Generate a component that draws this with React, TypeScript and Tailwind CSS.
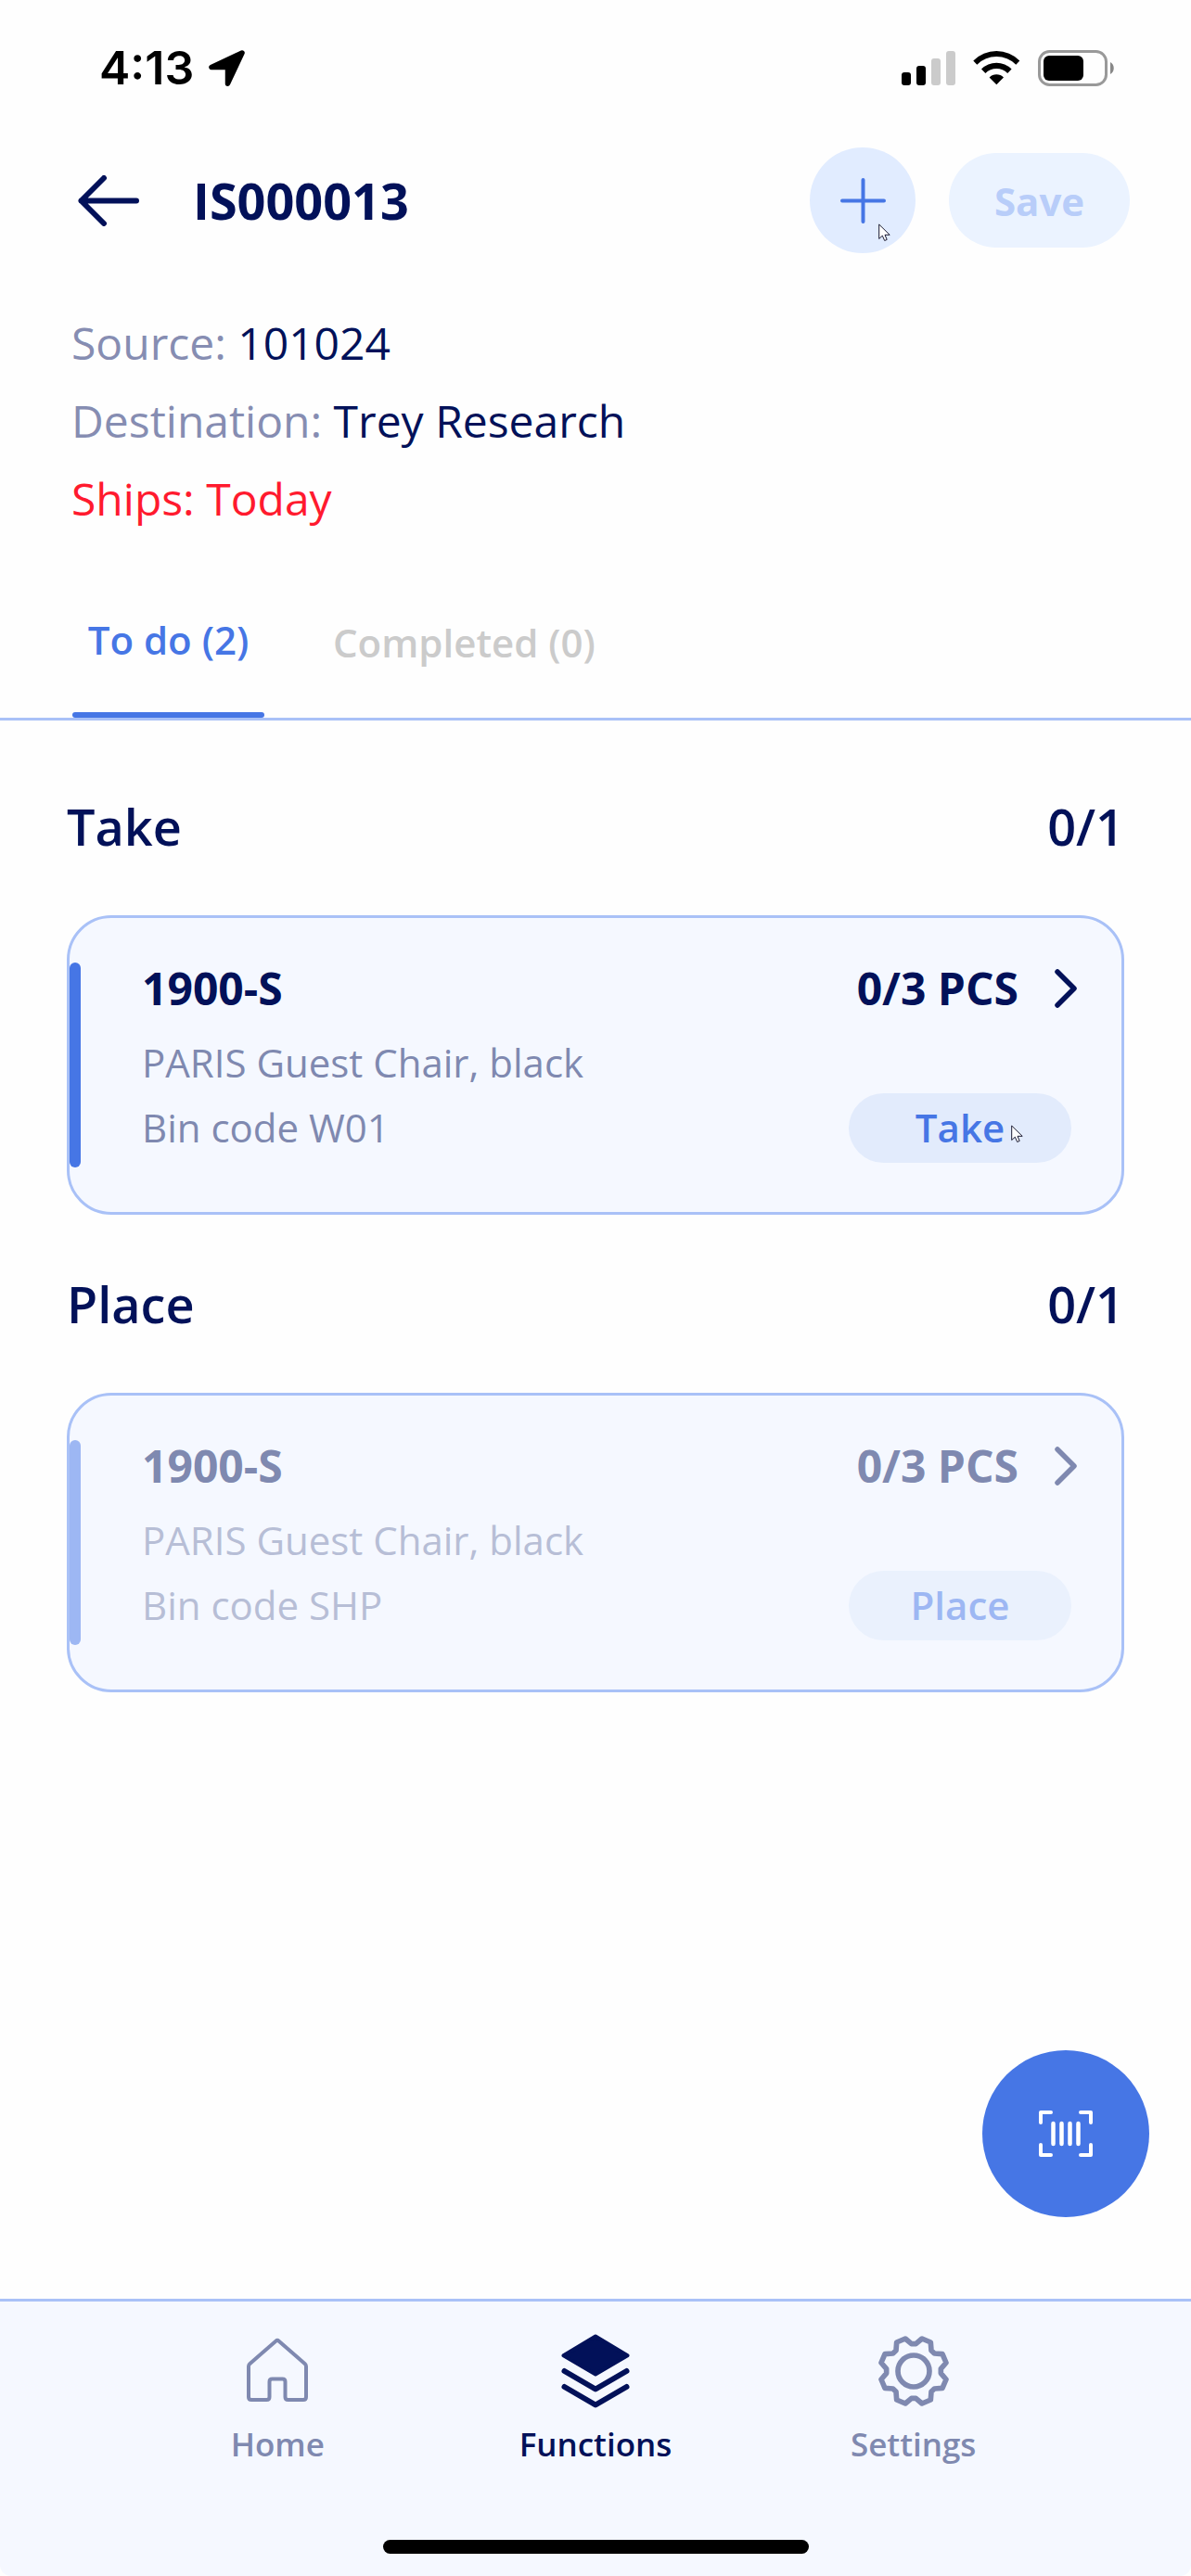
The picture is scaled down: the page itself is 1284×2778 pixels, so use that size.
function LocationIcon() {
  return (
    <svg width="39" height="39" viewBox="0 0 39 39" fill="black" stroke="black" strokeWidth="5.5" strokeLinejoin="round" aria-hidden="true">
      <path d="M36 3 3 18.500H20.500V36.200Z" />
    </svg>
  );
}

function SignalIcon() {
  return (
    <svg width="58" height="38" viewBox="0 0 58 38" aria-hidden="true">
      <rect x="0" y="24" width="10" height="14" rx="3" />
      <rect x="16" y="17" width="10" height="21" rx="3" />
      <rect x="32" y="9" width="10" height="29" rx="3" fill="#cbcbcb" />
      <rect x="48" y="1" width="10" height="37" rx="3" fill="#cbcbcb" />
    </svg>
  );
}

function WifiIcon() {
  return (
    <svg width="51" height="38" viewBox="0 0 51 38" aria-hidden="true">
      <path d="M.3 11.500A35 35 0 0 1 50.300 11.500L46.300 15.700A30 30 0 0 0 4.300 15.700Z" />
      <path d="M9 20.500A23 23 0 0 1 41.600 20.500L37.200 25A16.800 16.800 0 0 0 13.400 25Z" />
      <path d="M17.600 29.400A11 11 0 0 1 33 29.400L25.300 37.200Z" />
    </svg>
  );
}

function BatteryIcon() {
  return (
    <svg width="83" height="39" viewBox="0 0 83 39" aria-hidden="true">
      <rect x="1.5" y="1.5" width="72" height="36" rx="11" fill="none" stroke="#999" strokeWidth="3" />
      <rect x="6" y="6" width="43" height="27" rx="6" />
      <path d="M78 13c5 2.500 5 10.500 0 13Z" fill="#888" />
    </svg>
  );
}

function Pointer() {
  return (
    <svg width="14" height="20" viewBox="0 0 14 20" fill="white" stroke="#1b1b33" strokeWidth="1" aria-hidden="true">
      <path d="M.7 1V16.500L4.300 13.200 6.700 18.500 9.200 17.400 7 12.300H12.200Z" />
    </svg>
  );
}

function ChevronIcon() {
  return (
    <svg width="24" height="42" viewBox="0 0 24 42" fill="none" stroke="currentColor" strokeWidth="5.5" strokeLinecap="round" strokeLinejoin="round" aria-hidden="true">
      <path d="M3 3 21 21 3 39" />
    </svg>
  );
}

function HomeIcon() {
  return (
    <svg width="80" height="80" viewBox="0 0 80 80" fill="none" stroke="currentColor" strokeWidth="4" strokeLinejoin="round" aria-hidden="true">
      <path d="M38.300 7.700Q40 6.200 41.700 7.700L69.800 32.200Q71 33.300 71 35V68Q71 71 68 71H51.500Q48.500 71 48.500 68V51.500Q48.500 48.500 45.500 48.500H34.500Q31.500 48.500 31.500 51.500V68Q31.500 71 28.500 71H12Q9 71 9 68V35Q9 33.300 10.200 32.200Z" />
    </svg>
  );
}

function LayersIcon() {
  return (
    <svg width="80" height="80" viewBox="0 0 80 80" fill="none" stroke="currentColor" strokeLinecap="round" strokeLinejoin="round" aria-hidden="true">
      <path d="M40 2.500 74.500 23.300 40 43.500 5.500 23.300Z" fill="currentColor" strokeWidth="4" />
      <path d="M6.500 40 40 59.500 73.500 40" strokeWidth="6" />
      <path d="M6.500 57 40 76.500 73.500 57" strokeWidth="6" />
    </svg>
  );
}

function GearIcon() {
  return (
    <svg width="80" height="80" viewBox="-120 -120 240 240" fill="none" stroke="currentColor" strokeWidth="17" strokeLinejoin="round" aria-hidden="true">
      <path d="M7-88 27-105 55-93 57-67 67-57 93-55 105-27 88-7V7L105 27 93 55 67 57 57 67 55 93 27 105 7 88H-7L-27 105-55 93-57 67-67 57-93 55-105 27-88 7V-7L-105-27-93-55-67-57-57-67-55-93-27-105-7-88Z" />
      <circle r="51" />
    </svg>
  );
}

type Task = {
  heading: string;
  bin: string;
  action: string;
  active: boolean;
};

const tasks: Task[] = [
  { heading: "Take", bin: "W01", action: "Take", active: true },
  { heading: "Place", bin: "SHP", action: "Place", active: false },
];

function TaskCard({ task }: { task: Task }) {
  const { active } = task;
  return (
    <article className="relative mt-16 rounded-[48px] border-3 border-[#a9c1f7] bg-[#f5f8ff] pt-[46px] pr-12 pb-14 pl-[78px]">
      <span className={`absolute inset-y-12 left-0 w-3 rounded-full ${active ? "bg-[#4676e5]" : "bg-[#9db7f3]"}`} />
      <div className={`flex h-[60px] items-center text-[48px] font-bold ${active ? "text-[#021159]" : "text-[#7f89b0]"}`}>
        <h3>1900-S</h3>
        <span className="mr-[39px] ml-auto">0/3 PCS</span>
        <button type="button" aria-label="Open details">
          <ChevronIcon />
        </button>
      </div>
      <div className={`mt-[15px] text-[42px] leading-[70px] ${active ? "text-[#7f89b0]" : "text-[#b7bed6]"}`}>
        <p>PARIS Guest Chair, black</p>
        <div className="flex h-[70px] items-center justify-between">
          <p>Bin code {task.bin}</p>
          <button
            type="button"
            disabled={!active}
            className={`relative mr-1.5 h-[75px] w-60 rounded-full text-center font-semibold ${active ? "bg-[#e2ebfc] text-[#4676e5]" : "bg-[#eaf1fd] text-[#9db7f3]"}`}
          >
            {task.action}
            {active && (
              <span className="absolute top-[34px] left-[175px]">
                <Pointer />
              </span>
            )}
          </button>
        </div>
      </div>
    </article>
  );
}

export default function App() {
  return (
    <div className="flex min-h-screen flex-col bg-[#fefefe] font-['Open_Sans',sans-serif] text-[#021159]">
      <div className="flex h-[146px] items-center pr-[82px] pl-[107px] text-black">
        <span className="font-['Inter',sans-serif] text-[50px] font-semibold">4:13</span>
        <span className="ml-4">
          <LocationIcon />
        </span>
        <span className="ml-auto flex items-center gap-[19px]">
          <SignalIcon />
          <WifiIcon />
          <BatteryIcon />
        </span>
      </div>

      <header className="flex items-center pt-[13px] pr-[66px] pl-[84px]">
        <button type="button" aria-label="Back">
          <svg width="66" height="55" viewBox="0 0 66 55" fill="none" stroke="currentColor" strokeWidth="6" strokeLinecap="round" strokeLinejoin="round">
            <path d="M28 3 3.500 27.500 28 52M3.500 27.500H63" />
          </svg>
        </button>
        <h1 className="ml-[58px] text-[54px] leading-16 font-bold">IS000013</h1>
        <button type="button" aria-label="Add" className="relative ml-auto flex size-[114px] items-center justify-center rounded-full bg-[#e1ecff] text-[#4676e5]">
          <svg width="49" height="49" viewBox="0 0 49 49" fill="none" stroke="currentColor" strokeWidth="4" strokeLinecap="round">
            <path d="M24.500 2V47M2 24.500H47" />
          </svg>
          <span className="absolute top-[82px] left-[74px]">
            <Pointer />
          </span>
        </button>
        <button type="button" disabled className="ml-9 h-[102px] w-[195px] rounded-full bg-[#ebf3ff] text-[42px] font-bold text-[#b8cdf9]">
          Save
        </button>
      </header>

      <section className="mt-[55px] px-[77px] text-[48px] leading-[84px]">
        <p>
          <span className="text-[#868db2]">Source:</span> 101024
        </p>
        <p>
          <span className="text-[#868db2]">Destination:</span> Trey Research
        </p>
        <p className="text-[#ff1a2e]">Ships: Today</p>
      </section>

      <div role="tablist" className="mt-[30px] flex h-[167px] gap-[74px] border-b-3 border-[#a9c1f7] pl-[78px] text-[42px] font-semibold">
        <button type="button" role="tab" aria-selected="true" className="flex w-[207px] flex-col items-center text-[#4676e5]">
          <span className="flex flex-1 items-center whitespace-nowrap">To do (2)</span>
          <span className="h-1.5 w-full rounded-full bg-[#4676e5]" />
        </button>
        <button type="button" role="tab" aria-selected="false" className="text-[#cbcbcb]">
          Completed (0)
        </button>
      </div>

      <main className="relative flex-1 px-[72px] pt-[18px]">
        {tasks.map((task) => (
          <section key={task.heading} className="mt-16">
            <div className="flex justify-between text-[54px] leading-16 font-semibold">
              <h2>{task.heading}</h2>
              <span>0/1</span>
            </div>
            <TaskCard task={task} />
          </section>
        ))}
        <button type="button" aria-label="Scan barcode" className="absolute right-[45px] bottom-[88px] flex size-[180px] items-center justify-center rounded-full bg-[#4676e5]">
          <svg width="58" height="50" viewBox="0 0 58 50" fill="none" stroke="white" strokeWidth="4" strokeLinecap="round" strokeLinejoin="round">
            <path d="M2 13V2H13M45 2H56V13M56 37V48H45M13 48H2V37" />
            <path d="M15.500 14V36M24.500 14V36M33.500 14V36M42.500 14V36" strokeWidth="4.500" />
          </svg>
        </button>
      </main>

      <footer className="rounded-b-xl border-t-3 border-[#a9c1f7] bg-[#f5f8ff] px-[128px] pt-[35px] pb-6">
        <nav className="grid grid-cols-3 text-[35px] leading-[50px] font-semibold text-[#7f89b0]">
          <a href="#home" className="flex flex-col items-center gap-3.5">
            <HomeIcon />
            Home
          </a>
          <a href="#functions" aria-current="page" className="flex flex-col items-center gap-3.5 text-[#021159]">
            <LayersIcon />
            Functions
          </a>
          <a href="#settings" className="flex flex-col items-center gap-3.5">
            <GearIcon />
            Settings
          </a>
        </nav>
        <div className="mx-auto mt-[78px] h-[15px] w-[459px] rounded-full bg-black" />
      </footer>
    </div>
  );
}
